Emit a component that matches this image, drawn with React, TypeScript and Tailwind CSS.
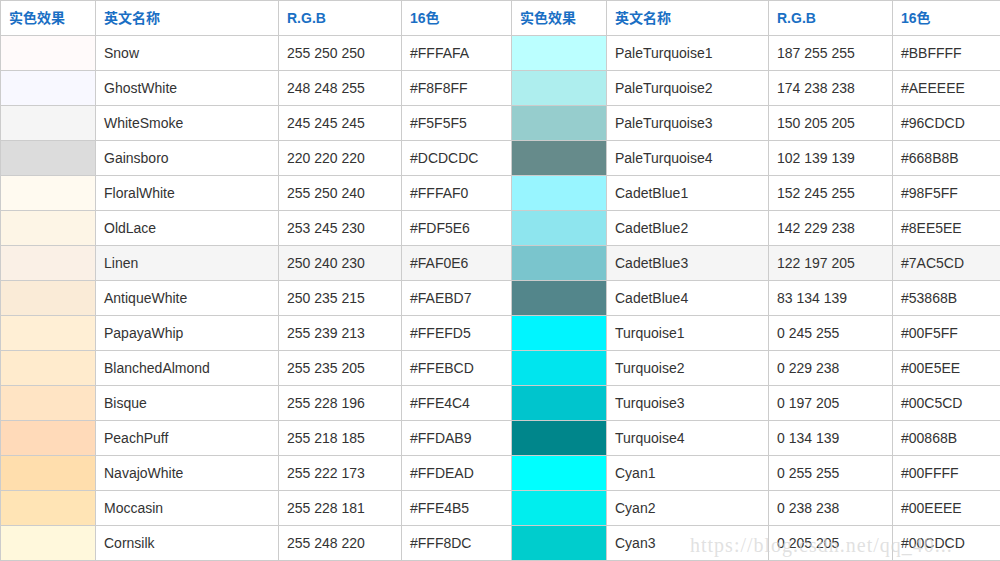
import React from 'react';

const left: [string, string, string][] = [
  ['Snow', '255 250 250', '#FFFAFA'],
  ['GhostWhite', '248 248 255', '#F8F8FF'],
  ['WhiteSmoke', '245 245 245', '#F5F5F5'],
  ['Gainsboro', '220 220 220', '#DCDCDC'],
  ['FloralWhite', '255 250 240', '#FFFAF0'],
  ['OldLace', '253 245 230', '#FDF5E6'],
  ['Linen', '250 240 230', '#FAF0E6'],
  ['AntiqueWhite', '250 235 215', '#FAEBD7'],
  ['PapayaWhip', '255 239 213', '#FFEFD5'],
  ['BlanchedAlmond', '255 235 205', '#FFEBCD'],
  ['Bisque', '255 228 196', '#FFE4C4'],
  ['PeachPuff', '255 218 185', '#FFDAB9'],
  ['NavajoWhite', '255 222 173', '#FFDEAD'],
  ['Moccasin', '255 228 181', '#FFE4B5'],
  ['Cornsilk', '255 248 220', '#FFF8DC'],
];

const right: [string, string, string][] = [
  ['PaleTurquoise1', '187 255 255', '#BBFFFF'],
  ['PaleTurquoise2', '174 238 238', '#AEEEEE'],
  ['PaleTurquoise3', '150 205 205', '#96CDCD'],
  ['PaleTurquoise4', '102 139 139', '#668B8B'],
  ['CadetBlue1', '152 245 255', '#98F5FF'],
  ['CadetBlue2', '142 229 238', '#8EE5EE'],
  ['CadetBlue3', '122 197 205', '#7AC5CD'],
  ['CadetBlue4', '83 134 139', '#53868B'],
  ['Turquoise1', '0 245 255', '#00F5FF'],
  ['Turquoise2', '0 229 238', '#00E5EE'],
  ['Turquoise3', '0 197 205', '#00C5CD'],
  ['Turquoise4', '0 134 139', '#00868B'],
  ['Cyan1', '0 255 255', '#00FFFF'],
  ['Cyan2', '0 238 238', '#00EEEE'],
  ['Cyan3', '0 205 205', '#00CDCD'],
];

const widths = ['w-[95px]', 'w-[183px]', 'w-[123px]', 'w-[110px]', 'w-[95px]', 'w-[162px]', 'w-[124px]', 'w-[108px]'];
const heads = ['实色效果', '英文名称', 'R.G.B', '16色', '实色效果', '英文名称', 'R.G.B', '16色'];
const cell = 'border border-[#cccccc] h-[35px] px-2 align-middle';

export default function App() {
  return (
    <div className="relative w-[1000px] h-[561px] overflow-hidden bg-white text-[14px] text-[#333]" style={{ fontFamily: '"Liberation Sans", "Noto Sans CJK SC", sans-serif' }}>
      <table className="border-collapse table-fixed w-[1000px]">
        <colgroup>
          {widths.map((w, i) => <col key={i} className={w} />)}
        </colgroup>
        <thead>
          <tr>
            {heads.map((h, i) => (
              <th key={i} className={`${cell} text-left font-bold text-[#1a6fc4]`}>{h}</th>
            ))}
          </tr>
        </thead>
        <tbody>
          {left.map((l, i) => {
            const r = right[i];
            return (
              <tr key={i} className={i === 6 ? 'bg-[#f5f5f5]' : ''}>
                <td className={cell} style={{ backgroundColor: l[2] }} />
                <td className={cell}>{l[0]}</td>
                <td className={cell}>{l[1]}</td>
                <td className={cell}>{l[2]}</td>
                <td className={cell} style={{ backgroundColor: r[2] }} />
                <td className={cell}>{r[0]}</td>
                <td className={cell}>{r[1]}</td>
                <td className={cell}>{r[2]}</td>
              </tr>
            );
          })}
        </tbody>
      </table>
      <div className="absolute left-[690px] top-[530px] text-[20px] text-[#d4d4d4]/70 tracking-[1px] pointer-events-none" style={{ fontFamily: '"Liberation Serif", serif' }}>
        https://blog.csdn.net/qq_40...
      </div>
    </div>
  );
}
